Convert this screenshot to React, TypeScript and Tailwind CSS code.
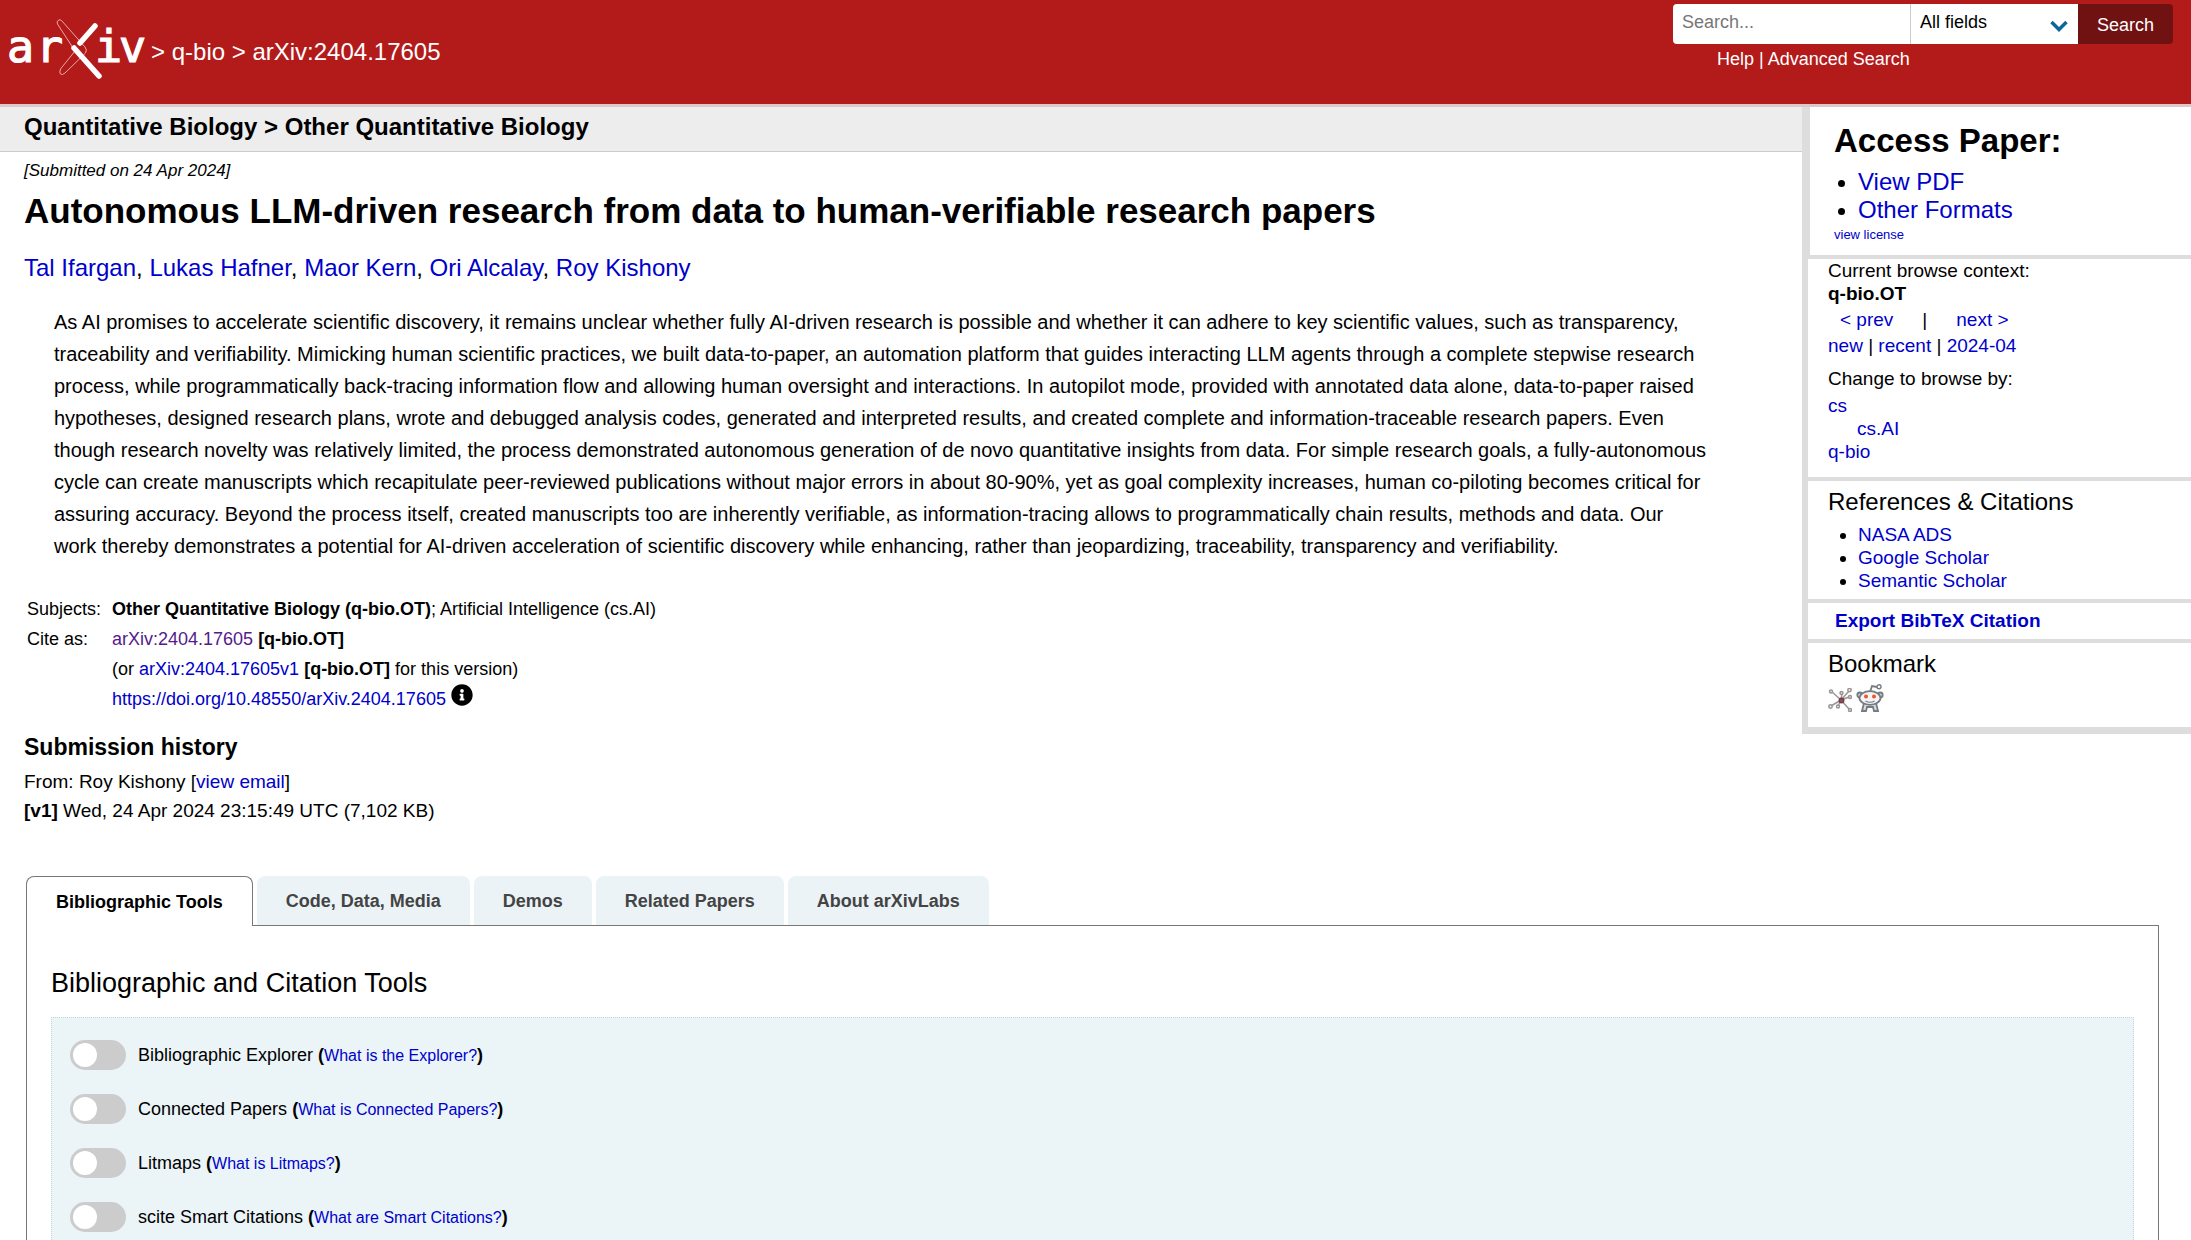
import React from "react";
import { FaInfoCircle } from "react-icons/fa";

const link = "text-[#0000cc] hover:underline";

const authors = ["Tal Ifargan", "Lukas Hafner", "Maor Kern", "Ori Alcalay", "Roy Kishony"];

const tabs = ["Bibliographic Tools", "Code, Data, Media", "Demos", "Related Papers", "About arXivLabs"];

const tools = [
  { id: "explorer", name: "Bibliographic Explorer", help: "What is the Explorer?" },
  { id: "connected", name: "Connected Papers", help: "What is Connected Papers?" },
  { id: "litmaps", name: "Litmaps", help: "What is Litmaps?" },
  { id: "scite", name: "scite Smart Citations", help: "What are Smart Citations?" },
];

function A({ children, className = "" }: { children: React.ReactNode; className?: string }) {
  return (
    <a href="#" className={`${link} ${className}`}>
      {children}
    </a>
  );
}

function Logo() {
  return (
    <svg viewBox="-6 0 144 62" className="h-[62px] w-[144px] overflow-visible" role="img" aria-label="arXiv">
      <g fill="#fff" stroke="#fff" strokeWidth="1.2" fontFamily="'DejaVu Sans Mono', monospace" fontSize="45">
        <text x="-2 27" y="43">
          ar
        </text>
        <text x="86 110" y="43">
          iv
        </text>
      </g>
      <path
        d="M52.500 1.500 L76 28 Q78.500 31 76.500 34 L56 54 Q53 56.500 51.500 55 Q50 53.500 51.500 50 L66 32 L48.500 5 Q47.500 2.500 49 1.500 Q51 0 52.500 1.500 Z"
        fill="none"
        stroke="#f0a5a5"
        strokeWidth="1"
      />
      <path d="M86 7 L71 24" stroke="#fff" strokeWidth="5.500" strokeLinecap="round" />
      <path d="M65 29 L90 57" stroke="#fff" strokeWidth="5.500" strokeLinecap="round" />
    </svg>
  );
}

function BibSonomyIcon() {
  return (
    <svg viewBox="0 0 24 24" className="size-6" fill="none" stroke="#9a9696" strokeWidth="1.5" role="img" aria-label="BibSonomy">
      <path d="M13 12 L3 3 M13 12 L21 21 M13 12 L3 18 M13 12 L21 3 M13 12 L10 18 M13 12 L14 5 M13 12 L21 9" />
      <g fill="#eee">
        <circle cx="3" cy="3.500" r="1.500" />
        <circle cx="21.500" cy="2" r="1.700" />
        <circle cx="13.500" cy="5" r="1.500" />
        <circle cx="22" cy="9" r="1.500" />
        <circle cx="2.500" cy="18.500" r="1.700" />
        <circle cx="10" cy="18.500" r="1.500" />
        <circle cx="22" cy="22" r="1.500" />
      </g>
      <circle cx="13.500" cy="12.500" r="2.200" fill="#9b4a55" stroke="#6d4048" />
    </svg>
  );
}

function RedditIcon() {
  return (
    <svg viewBox="0 0 28 28" className="size-7" fill="none" stroke="#747c82" strokeWidth="1.800" role="img" aria-label="Reddit">
      <path d="M14 8 L16 2 L21 3" />
      <circle cx="23" cy="2.800" r="2" strokeWidth="1.400" />
      <circle cx="3.800" cy="11" r="2.500" fill="#ddd" />
      <circle cx="24.200" cy="11" r="2.500" fill="#ddd" />
      <path d="M8 19 L6 27 H10 L11 23 H17 L18 27 H22 L20 19" fill="#ddd" />
      <ellipse cx="14" cy="14" rx="10.500" ry="6.800" fill="#f4f4f4" />
      <circle cx="10" cy="12.500" r="2" fill="#f0562a" stroke="none" />
      <circle cx="18" cy="12.500" r="2" fill="#f0562a" stroke="none" />
      <path d="M9.500 17 Q14 19.500 18.500 17" strokeWidth="1.200" />
    </svg>
  );
}

function Header() {
  return (
    <header className="flex h-[107px] items-start justify-between border-b-[3px] border-[#dcc8c8] bg-[#b31b1b] text-white">
      <div className="flex items-start gap-1 pt-[19px] pl-[3px] text-[24px] leading-[66px]">
        <a href="#" aria-label="arXiv home">
          <Logo />
        </a>
        <span>
          &gt; <a href="#">q-bio</a> &gt; <a href="#">arXiv:2404.17605</a>
        </span>
      </div>
      <form className="pt-1 pr-[18px] text-[18px]" onSubmit={(e) => e.preventDefault()}>
        <div className="flex h-10">
          <input
            type="text"
            aria-label="Search term or terms"
            placeholder="Search..."
            className="w-[238px] rounded-l border-r border-[#ccc] bg-white px-[9px] pb-1 text-black placeholder:text-[#777]"
          />
          <div className="relative">
            <select
              aria-label="Field to search"
              className="h-10 w-[167px] appearance-none bg-white pr-10 pb-1 pl-[9px] text-black"
            >
              <option>All fields</option>
              <option>Title</option>
              <option>Author</option>
              <option>Abstract</option>
            </select>
            <svg
              viewBox="0 0 18 12"
              className="pointer-events-none absolute top-4 right-2.5 h-3 w-[18px]"
              fill="none"
              stroke="#0b679b"
              strokeWidth="3.500"
            >
              <path d="M1.500 2 L9 9.500 L16.500 2" />
            </svg>
          </div>
          <button type="submit" className="w-[95px] rounded-r bg-[#701112] pt-0.5">
            Search
          </button>
        </div>
        <div className="pt-[3px] pl-11 leading-6">
          <a href="#">Help</a> | <a href="#">Advanced Search</a>
        </div>
      </form>
    </header>
  );
}

function Sidebar() {
  return (
    <aside className="w-[389px] shrink-0 self-start border-b-[3px] border-l-[6px] border-[#ddd] text-[19px] leading-[23px]">
      <section className="border-b-4 border-l-2 border-[#ddd] pt-3 pb-[11px] pl-6">
        <h2 className="text-[33px] leading-[44px] font-bold">Access Paper:</h2>
        <ul className="list-disc pt-[5px] pl-6 text-[24px] leading-7 marker:text-[22px]">
          <li>
            <A>View PDF</A>
          </li>
          <li>
            <A>Other Formats</A>
          </li>
        </ul>
        <A className="block pt-px text-[13px] leading-[19px]">view license</A>
      </section>
      <section className="border-b-4 border-[#ddd] pb-3.5 pl-5">
        <p>Current browse context:</p>
        <p className="font-bold">q-bio.OT</p>
        <p className="flex pt-[3px] pl-3">
          <A>&lt; prev</A>
          <span className="px-[29px]">|</span>
          <A>next &gt;</A>
        </p>
        <p className="pt-[3px]">
          <A>new</A> | <A>recent</A> | <A>2024-04</A>
        </p>
        <p className="pt-2.5 pb-1">Change to browse by:</p>
        <A className="block">cs</A>
        <A className="block pl-[29px]">cs.AI</A>
        <A className="block">q-bio</A>
      </section>
      <section className="border-b-4 border-[#ddd] pt-1.5 pb-[7px] pl-5">
        <h3 className="pb-1.5 text-[24px] leading-[30px]">References &amp; Citations</h3>
        <ul className="list-disc pl-[30px]">
          <li>
            <A>NASA ADS</A>
          </li>
          <li>
            <A>Google Scholar</A>
          </li>
          <li>
            <A>Semantic Scholar</A>
          </li>
        </ul>
      </section>
      <section className="border-b-4 border-[#ddd] pt-1.5 pb-[7px] pl-[27px]">
        <button type="button" className="block font-bold text-[#0000cc]">
          Export BibTeX Citation
        </button>
      </section>
      <section className="border-b-4 border-[#ddd] pt-[5px] pb-[15px] pl-5">
        <h3 className="text-[24px] leading-[32px]">Bookmark</h3>
        <div className="flex items-end gap-1 pt-1">
          <a href="#">
            <BibSonomyIcon />
          </a>
          <a href="#">
            <RedditIcon />
          </a>
        </div>
      </section>
    </aside>
  );
}

function Paper() {
  return (
    <main className="min-w-0 flex-1">
      <h1 className="border-b border-[#ccc] bg-[#ededed] pt-0.5 pb-1.5 pl-6 text-[24px] leading-9 font-bold">
        Quantitative Biology &gt; Other Quantitative Biology
      </h1>
      <div className="px-6">
        <p className="pt-[7px] text-[17px] leading-6 italic">[Submitted on 24 Apr 2024]</p>
        <h2 className="pt-1.5 text-[35px] leading-[44px] font-bold">
          Autonomous LLM-driven research from data to human-verifiable research papers
        </h2>
        <p className="pt-[19px] text-[24px] leading-8">
          {authors.map((name, i) => (
            <React.Fragment key={name}>
              {i > 0 && ", "}
              <A>{name}</A>
            </React.Fragment>
          ))}
        </p>
        <blockquote className="pt-[22px] pr-[70px] pl-[30px] text-[20px] leading-8">
          As AI promises to accelerate scientific discovery, it remains unclear whether fully AI-driven research is
          possible and whether it can adhere to key scientific values, such as transparency, traceability and
          verifiability. Mimicking human scientific practices, we built data-to-paper, an automation platform that guides
          interacting LLM agents through a complete stepwise research process, while programmatically back-tracing
          information flow and allowing human oversight and interactions. In autopilot mode, provided with annotated data
          alone, data-to-paper raised hypotheses, designed research plans, wrote and debugged analysis codes, generated
          and interpreted results, and created complete and information-traceable research papers. Even though research
          novelty was relatively limited, the process demonstrated autonomous generation of de novo quantitative insights
          from data. For simple research goals, a fully-autonomous cycle can create manuscripts which recapitulate
          peer-reviewed publications without major errors in about 80-90%, yet as goal complexity increases, human
          co-piloting becomes critical for assuring accuracy. Beyond the process itself, created manuscripts too are
          inherently verifiable, as information-tracing allows to programmatically chain results, methods and data. Our
          work thereby demonstrates a potential for AI-driven acceleration of scientific discovery while enhancing,
          rather than jeopardizing, traceability, transparency and verifiability.
        </blockquote>
        <table className="mt-8 ml-[3px] text-[18px] leading-[30px]">
          <tbody>
            <tr>
              <th scope="row" className="w-[85px] text-left align-top font-normal">
                Subjects:
              </th>
              <td>
                <b>Other Quantitative Biology (q-bio.OT)</b>; Artificial Intelligence (cs.AI)
              </td>
            </tr>
            <tr>
              <th scope="row" className="text-left align-top font-normal">
                Cite as:
              </th>
              <td>
                <a href="#" className="text-[#551a8b]">
                  arXiv:2404.17605
                </a>{" "}
                <b>[q-bio.OT]</b>
              </td>
            </tr>
            <tr>
              <td />
              <td>
                (or <A>arXiv:2404.17605v1</A> <b>[q-bio.OT]</b> for this version)
              </td>
            </tr>
            <tr>
              <td />
              <td>
                <span className="flex gap-[5px]">
                  <A>https://doi.org/10.48550/arXiv.2404.17605</A>
                  <FaInfoCircle className="size-[22px]" />
                </span>
              </td>
            </tr>
          </tbody>
        </table>
        <h2 className="pt-4 text-[23px] leading-[34px] font-bold">Submission history</h2>
        <p className="pt-[3px] text-[19px] leading-[29px]">
          From: Roy Kishony [<A>view email</A>]
        </p>
        <p className="text-[19px] leading-[29px]">
          <b>[v1]</b> Wed, 24 Apr 2024 23:15:49 UTC (7,102 KB)
        </p>
      </div>
    </main>
  );
}

function Labs() {
  return (
    <section className="mt-[51px] mr-8 ml-[26px] flex flex-1 flex-col">
      <div role="tablist" className="relative z-10 -mb-px flex items-stretch gap-1 text-[18px] leading-6 font-bold">
        {tabs.map((tab, i) => (
          <button
            key={tab}
            type="button"
            role="tab"
            aria-selected={i === 0}
            className={
              i === 0
                ? "rounded-t-lg border border-b-0 border-[#777] bg-white px-[29px] pt-[13px] pb-3"
                : "mb-px rounded-t-lg bg-[#ebf3f7] px-[29px] pt-3 pb-3 text-[#444]"
            }
          >
            {tab}
          </button>
        ))}
      </div>
      <div role="tabpanel" className="flex flex-1 flex-col border border-b-0 border-[#777] px-6 pt-[37px]">
        <h2 className="text-[27px] leading-10">Bibliographic and Citation Tools</h2>
        <div className="mt-[14px] flex flex-1 flex-col gap-6 border border-b-0 border-dotted border-[#c5d8d8] bg-[#ebf4f7] pt-[22px] pl-[18px] text-[18px] leading-[30px]">
          {tools.map((tool) => (
            <div key={tool.id} className="flex h-[30px] items-center gap-3">
              <input
                id={tool.id}
                type="checkbox"
                role="switch"
                className="h-[30px] w-14 appearance-none rounded-full bg-[#ccc] p-[3px] before:block before:size-6 before:rounded-full before:bg-white checked:bg-[#1f5e96] checked:before:ml-[26px]"
              />
              <span>
                <label htmlFor={tool.id}>{tool.name}</label> <b>(</b>
                <A className="text-[16px]">{tool.help}</A>
                <b>)</b>
              </span>
            </div>
          ))}
        </div>
      </div>
    </section>
  );
}

export default function App() {
  return (
    <div className="flex min-h-screen flex-col bg-white font-['Liberation_Sans',Arial,sans-serif] text-black">
      <Header />
      <div className="flex">
        <Paper />
        <Sidebar />
      </div>
      <Labs />
    </div>
  );
}
